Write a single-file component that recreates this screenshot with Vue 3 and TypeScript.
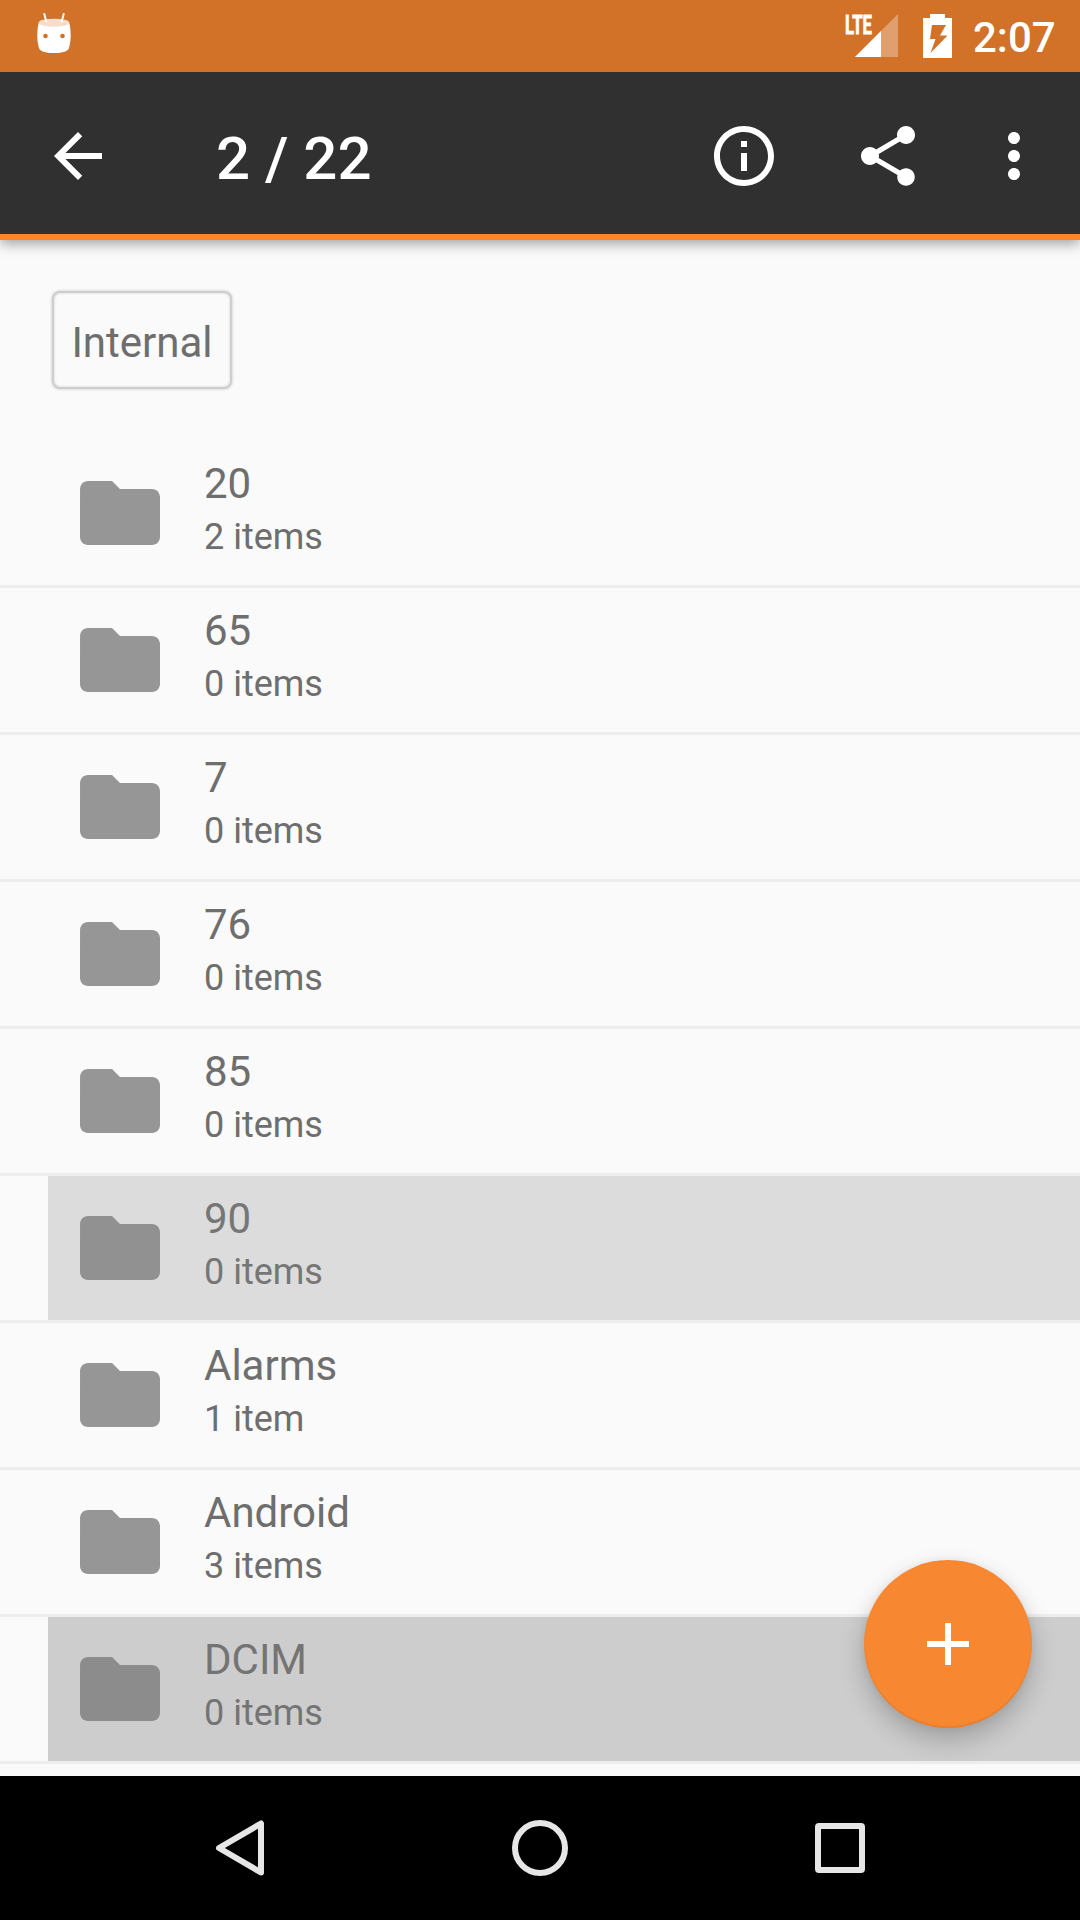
<script setup lang="ts">
interface Folder {
  name: string
  items: number
  state?: 'selected' | 'active'
}

const folders: Folder[] = [
  { name: '20', items: 2 },
  { name: '65', items: 0 },
  { name: '7', items: 0 },
  { name: '76', items: 0 },
  { name: '85', items: 0 },
  { name: '90', items: 0, state: 'selected' },
  { name: 'Alarms', items: 1 },
  { name: 'Android', items: 3 },
  { name: 'DCIM', items: 0, state: 'active' },
]

const countLabel = (n: number): string => (n === 1 ? '1 item' : `${n} items`)
</script>

<template>
  <div class="screen">
    <header class="status">
      <svg class="marshmallow" width="36" height="42" viewBox="0 0 36 42">
        <path d="M3 10C1 16 0.500 28 3 36C4 39.500 9 41 18 41C27 41 32 39.500 33 36C35.500 28 35 16 33 10Z" fill="#fff" />
        <ellipse cx="18" cy="10.700" rx="15.300" ry="4" fill="#f5dccb" />
        <path d="M8.300 2L10.300 9.500M27.700 2L25.700 9.500" stroke="#fff" stroke-width="2" stroke-linecap="round" />
        <circle cx="9.500" cy="24" r="2.300" fill="#d17228" />
        <circle cx="26.500" cy="24" r="2.300" fill="#d17228" />
      </svg>
      <div class="indicators">
        <svg class="signal" width="54" height="46" viewBox="0 0 54 46">
          <path d="M53 1V44H10Z" fill="#fff" fill-opacity="0.320" />
          <path d="M36 18V44H10Z" fill="#fff" />
          <text class="lte" x="0" y="20.500" textLength="27" lengthAdjust="spacingAndGlyphs">LTE</text>
        </svg>
        <svg class="battery" width="29" height="44" viewBox="0 0 29 44">
          <path fill="#fff" fill-rule="evenodd" d="M7 0H22V4H29V44H0V4H7ZM9 11L7 25H12.500L7.500 39L24.500 21.500H17L23 11Z" />
        </svg>
        <span class="clock">2:07</span>
      </div>
    </header>

    <div class="toolbar">
      <svg class="icon" viewBox="0 0 24 24"><path d="M20 11H7.830l5.590-5.590L12 4l-8 8 8 8 1.410-1.410L7.830 13H20v-2z" /></svg>
      <h1 class="title">2 / 22</h1>
      <svg class="icon info" viewBox="0 0 24 24"><path d="M11 17h2v-6h-2v6zm1-15C6.480 2 2 6.480 2 12s4.480 10 10 10 10-4.480 10-10S17.520 2 12 2zm0 18c-4.410 0-8-3.590-8-8s3.590-8 8-8 8 3.590 8 8-3.590 8-8 8zM11 9h2V7h-2v2z" /></svg>
      <svg class="icon share" viewBox="0 0 24 24"><path d="M18 16.080c-.76 0-1.440.3-1.960.77L8.910 12.700c.05-.23.090-.46.090-.7s-.04-.47-.09-.7l7.050-4.110c.54.5 1.250.81 2.040.81 1.660 0 3-1.340 3-3s-1.340-3-3-3-3 1.340-3 3c0 .24.040.47.090.7L8.040 9.810C7.500 9.310 6.790 9 6 9c-1.660 0-3 1.340-3 3s1.340 3 3 3c.79 0 1.500-.31 2.040-.81l7.120 4.160c-.05.21-.08.430-.08.650 0 1.610 1.310 2.920 2.920 2.920 1.610 0 2.920-1.310 2.920-2.920s-1.310-2.920-2.920-2.920z" /></svg>
      <svg class="icon more" viewBox="0 0 24 24"><path d="M12 8c1.100 0 2-.9 2-2s-.9-2-2-2-2 .9-2 2 .9 2 2 2zm0 2c-1.100 0-2 .9-2 2s.9 2 2 2 2-.9 2-2-.9-2-2-2zm0 6c-1.100 0-2 .9-2 2s.9 2 2 2 2-.9 2-2-.9-2-2-2z" /></svg>
    </div>

    <main class="content">
      <div class="crumbs"><button class="crumb">Internal</button></div>
      <ul class="list">
        <li v-for="f in folders" :key="f.name" class="row">
          <div class="entry" :class="f.state">
            <svg class="folder" viewBox="0 0 24 24"><path d="M10 4H4c-1.100 0-1.990.9-1.990 2L2 18c0 1.100.9 2 2 2h16c1.100 0 2-.9 2-2V8c0-1.100-.9-2-2-2h-8l-2-2z" /></svg>
            <div class="labels">
              <span class="name">{{ f.name }}</span>
              <span class="count">{{ countLabel(f.items) }}</span>
            </div>
          </div>
        </li>
      </ul>
      <button class="fab" aria-label="Add">
        <svg class="icon" viewBox="0 0 24 24"><path d="M19 13h-6v6h-2v-6H5v-2h6V5h2v6h6v2z" /></svg>
      </button>
    </main>

    <nav class="navbar">
      <svg width="72" height="72" viewBox="0 0 72 72"><path d="M57 11.500V60.500L15 36Z" /></svg>
      <svg width="72" height="72" viewBox="0 0 72 72"><circle cx="36" cy="36" r="25" /></svg>
      <svg width="72" height="72" viewBox="0 0 72 72"><rect x="14" y="14" width="44" height="44" rx="1" /></svg>
    </nav>
  </div>
</template>

<style>
body {
  margin: 0;
}
</style>

<style scoped>
.screen {
  width: 1080px;
  height: 1920px;
  display: flex;
  flex-direction: column;
  overflow: hidden;
  background: #fafafa;
  color: #6e6e6e;
  font-family: Roboto, sans-serif;
}
svg {
  display: block;
  flex: none;
}
button {
  font: inherit;
  color: inherit;
  padding: 0;
}
.status {
  height: 72px;
  flex: none;
  display: flex;
  justify-content: space-between;
  align-items: flex-start;
  background: #d17228;
  color: #fff;
  position: relative;
  z-index: 2;
}
.marshmallow {
  margin: 12px 0 0 36px;
}
.indicators {
  display: flex;
  align-items: flex-start;
  padding: 13px 24px 0 0;
}
.signal {
  overflow: visible;
}
.lte {
  font: 700 26px Roboto, sans-serif;
  fill: #fff;
  stroke: #fff;
  stroke-width: 0.8px;
}
.battery {
  margin: 1px 21px 0 24px;
}
.clock {
  width: 83px;
  margin-top: 1px;
  font-size: 42px;
  font-weight: 500;
  line-height: 48px;
}
.toolbar {
  height: 162px;
  flex: none;
  display: flex;
  align-items: center;
  padding: 0 30px 0 42px;
  background: #303030;
  border-bottom: 6px solid #f78731;
  box-shadow: 0 4px 12px rgba(0, 0, 0, 0.35);
  color: #fff;
  position: relative;
  z-index: 1;
}
.toolbar .icon {
  margin-top: 6px;
}
.icon {
  width: 72px;
  height: 72px;
  fill: #fff;
}
.title {
  flex: 1;
  margin: 11px 0 0 102px;
  font-size: 60px;
  font-weight: 500;
  line-height: 72px;
}
.share {
  margin-left: 72px;
}
.more {
  margin-left: 54px;
}
.content {
  flex: 1;
  position: relative;
}
.crumbs {
  height: 201px;
  box-sizing: border-box;
  padding: 51px 0 0 52px;
}
.crumb {
  width: 180px;
  height: 98px;
  box-sizing: border-box;
  background: #fafafa;
  border: 2px solid #cecece;
  border-radius: 8px;
  box-shadow: 0 0 3px rgba(0, 0, 0, 0.24), inset 0 0 3px rgba(0, 0, 0, 0.16);
  font-size: 42px;
  line-height: 48px;
  padding: 5px 0 0;
}
.list {
  margin: 0;
  padding: 0;
  list-style: none;
}
.row {
  height: 144px;
  padding-left: 48px;
  border-bottom: 3px solid #ededed;
}
.entry {
  height: 144px;
  box-sizing: border-box;
  padding: 19px 0 0 24px;
  display: flex;
  align-items: flex-start;
}
.folder {
  width: 96px;
  height: 96px;
  margin-top: 5px;
  fill: #969696;
}
.labels {
  display: flex;
  flex-direction: column;
  margin-left: 36px;
}
.name {
  font-size: 42px;
  line-height: 48px;
}
.count {
  margin-top: 8px;
  font-size: 36px;
  line-height: 42px;
}
.selected {
  background: #dcdcdc;
  color: #767676;
}
.selected .folder {
  fill: #919191;
}
.active {
  background: #cdcdcd;
  color: #747474;
}
.active .folder {
  fill: #8c8c8c;
}
.fab {
  position: absolute;
  right: 48px;
  bottom: 48px;
  width: 168px;
  height: 168px;
  display: flex;
  align-items: center;
  justify-content: center;
  border: 0;
  border-radius: 50%;
  background: #f78731;
  box-shadow: 0 12px 26px rgba(0, 0, 0, 0.22), 0 0 8px rgba(0, 0, 0, 0.06), inset 0 -2px 1px rgba(0, 0, 0, 0.06);
}
.navbar {
  height: 144px;
  flex: none;
  display: flex;
  align-items: center;
  justify-content: center;
  gap: 228px;
  background: #000;
}
.navbar svg {
  fill: none;
  stroke: #e6e6e6;
  stroke-width: 6;
  stroke-linejoin: round;
}
</style>
